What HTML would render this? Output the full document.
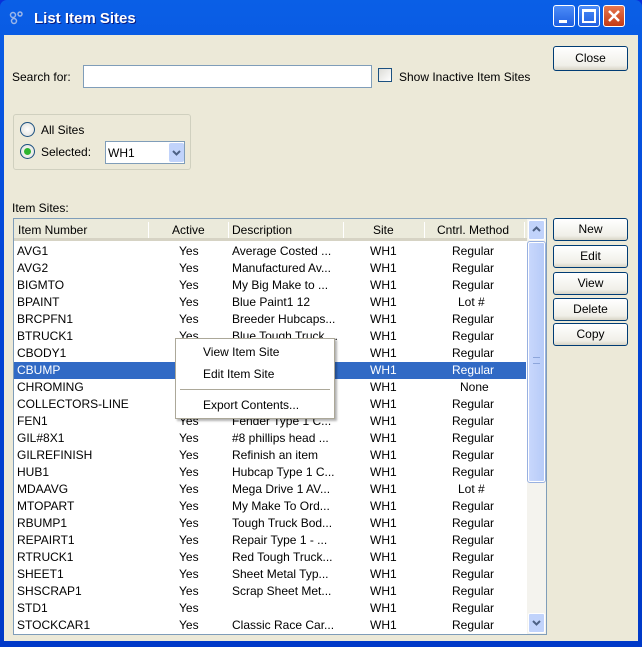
<!DOCTYPE html>
<html><head><style>
*{margin:0;padding:0;box-sizing:border-box}
body{width:642px;height:647px;overflow:hidden;font-family:"Liberation Sans",sans-serif;font-size:12px;color:#000;background:#0831d9;position:relative}
.win{position:absolute;left:0;top:0;width:642px;height:647px;background:linear-gradient(#0a5fe6,#0346d8 40%,#0039c8);border-radius:7px 7px 0 0}
.client{position:absolute;left:4px;top:35px;width:634px;height:606px;background:#ece9d8}
.title{position:absolute;left:34px;top:10px;color:#fff;font-weight:bold;font-size:15px;text-shadow:1px 1px #0a1c80}
.tb{position:absolute;top:5px;width:22px;height:22px;border:1px solid #fff;border-radius:3px;background:linear-gradient(#4c8cf8,#1f5fe0)}
.abs{position:absolute}
.btn{position:absolute;left:553px;width:75px;height:23px;border:1px solid #003c74;border-radius:3px;background:linear-gradient(#fff,#f0efe8 80%,#d8d4c6);text-align:center;line-height:21px;font-size:12px}
.table{position:absolute;left:13px;top:218px;width:534px;height:417px;border:1px solid #7f9db9;background:#fff;overflow:hidden}
.hdr{position:absolute;left:0;top:0;width:513px;height:22px;background:#ebeadb;border-bottom:3px solid #d6d3c4}
.hdr span{position:absolute;top:4px}
.sep{position:absolute;top:3px;width:1px;height:16px;background:#c7c5b2;border-right:1px solid #fff}
.row{position:absolute;left:0;width:512px;height:17px;line-height:17px}
.row span{position:absolute;white-space:nowrap}
.sel{background:#316ac5;color:#fff}
</style></head><body>
<div class="win"></div>
<svg class="abs" style="left:9px;top:11px" width="16" height="14"><circle cx="4" cy="4" r="2.5" fill="none" stroke="#9cb6e8" stroke-width="1.5"/><circle cx="11" cy="3" r="2" fill="none" stroke="#9cb6e8" stroke-width="1.5"/><circle cx="5" cy="10" r="2.5" fill="none" stroke="#9cb6e8" stroke-width="1.5"/></svg>
<div class="title">List Item Sites</div>
<div class="tb" style="left:553px"><div class="abs" style="left:5px;top:14px;width:8px;height:3px;background:#fff"></div></div>
<div class="tb" style="left:578px"><div class="abs" style="left:3px;top:3px;width:14px;height:14px;border:2px solid #fff;border-top-width:3px"></div></div>
<div class="tb" style="left:603px;background:linear-gradient(#e6774f,#c53a14)"><svg class="abs" style="left:2px;top:2px" width="16" height="16"><path d="M3 3L13 13M13 3L3 13" stroke="#fff" stroke-width="2.5"/></svg></div>
<div class="client"></div>
<div class="btn" style="top:46px;height:25px;line-height:23px">Close</div>
<div class="abs" style="left:12px;top:70px">Search for:</div>
<div class="abs" style="left:83px;top:65px;width:289px;height:23px;border:1px solid #7f9db9;background:#fff"></div>
<div class="abs" style="left:378px;top:68px;width:14px;height:14px;border:1px solid #1c5180;background:linear-gradient(135deg,#dcdcd7,#fff)"></div>
<div class="abs" style="left:399px;top:70px">Show Inactive Item Sites</div>
<div class="abs" style="left:13px;top:114px;width:178px;height:56px;border:1px solid #d0d0bf;border-radius:3px"></div>
<div class="abs" style="left:20px;top:122px;width:15px;height:15px;border:1px solid #1c5180;border-radius:50%;background:radial-gradient(#fff,#dcdcd7)"></div>
<div class="abs" style="left:41px;top:123px">All Sites</div>
<div class="abs" style="left:20px;top:144px;width:15px;height:15px;border:1px solid #1c5180;border-radius:50%;background:radial-gradient(#fff,#dcdcd7)"><div class="abs" style="left:3px;top:3px;width:7px;height:7px;border-radius:50%;background:#2fb52f"></div></div>
<div class="abs" style="left:41px;top:145px">Selected:</div>
<div class="abs" style="left:105px;top:141px;width:80px;height:23px;border:1px solid #7f9db9;background:#fff"><span class="abs" style="left:2px;top:4px">WH1</span><div class="abs" style="left:63px;top:1px;width:15px;height:19px;background:#c1d3fb;border-radius:2px"><svg width="15" height="19"><path d="M4 8l3.5 3.5L11 8" stroke="#4d6185" stroke-width="2" fill="none"/></svg></div></div>
<div class="abs" style="left:12px;top:201px">Item Sites:</div>
<div class="table">
<div class="hdr">
<span style="left:4px">Item Number</span><div class="sep" style="left:134px"></div>
<span style="left:158px">Active</span><div class="sep" style="left:214px"></div>
<span style="left:218px">Description</span><div class="sep" style="left:329px"></div>
<span style="left:359px">Site</span><div class="sep" style="left:410px"></div>
<span style="left:423px">Cntrl. Method</span><div class="sep" style="left:510px"></div>
</div>
<div id="rows"></div>
<div class="abs" style="left:513px;top:0;width:19px;height:415px;background:#f4f3ee"></div>
<div class="abs" style="left:514px;top:1px;width:17px;height:20px;background:#c1d3fb;border:1px solid #fff;border-radius:2px"><svg width="15" height="18"><path d="M4 10l3.5-3.5L11 10" stroke="#4d6185" stroke-width="2" fill="none"/></svg></div>
<div class="abs" style="left:514px;top:23px;width:17px;height:240px;background:linear-gradient(90deg,#c8d7fc,#b7cbf8);border:1px solid #fff;outline:1px solid #98b0e0;border-radius:2px"><div class="abs" style="left:4px;top:114px;width:7px;height:7px;border-top:1px solid #8da6db;border-bottom:1px solid #8da6db"></div></div>
<div class="abs" style="left:514px;top:394px;width:17px;height:20px;background:#c1d3fb;border:1px solid #fff;border-radius:2px"><svg width="15" height="18"><path d="M4 7l3.5 3.5L11 7" stroke="#4d6185" stroke-width="2" fill="none"/></svg></div>
</div>
<div class="btn" style="top:218px">New</div>
<div class="btn" style="top:245px">Edit</div>
<div class="btn" style="top:272px">View</div>
<div class="btn" style="top:298px">Delete</div>
<div class="btn" style="top:323px">Copy</div>
<div class="abs" style="left:175px;top:338px;width:160px;height:81px;background:#fff;border:1px solid #aca899;box-shadow:2px 2px 2px rgba(0,0,0,.3)">
<div class="abs" style="left:27px;top:6px">View Item Site</div>
<div class="abs" style="left:27px;top:28px">Edit Item Site</div>
<div class="abs" style="left:4px;top:50px;width:150px;height:1px;background:#aca899"></div>
<div class="abs" style="left:27px;top:59px">Export Contents...</div>
</div>
<script>
var d=[["AVG1","Average Costed ...","Regular"],["AVG2","Manufactured Av...","Regular"],["BIGMTO","My Big Make to ...","Regular"],["BPAINT","Blue Paint1 12","Lot #"],["BRCPFN1","Breeder Hubcaps...","Regular"],["BTRUCK1","Blue Tough Truck ...","Regular"],["CBODY1","Tough Truck Bod...","Regular"],["CBUMP","Tough Truck Bu...","Regular"],["CHROMING","Chrome Service ...","None"],["COLLECTORS-LINE","Collectors Line ...","Regular"],["FEN1","Fender Type 1 C...","Regular"],["GIL#8X1","#8 phillips head ...","Regular"],["GILREFINISH","Refinish an item","Regular"],["HUB1","Hubcap Type 1 C...","Regular"],["MDAAVG","Mega Drive 1 AV...","Lot #"],["MTOPART","My Make To Ord...","Regular"],["RBUMP1","Tough Truck Bod...","Regular"],["REPAIRT1","Repair Type 1 - ...","Regular"],["RTRUCK1","Red Tough Truck...","Regular"],["SHEET1","Sheet Metal Typ...","Regular"],["SHSCRAP1","Scrap Sheet Met...","Regular"],["STD1","","Regular"],["STOCKCAR1","Classic Race Car...","Regular"]];
var h="";d.forEach(function(r,i){h+='<div class="row'+(i==7?' sel':'')+'" style="top:'+(24+i*17)+'px"><span style="left:3px">'+r[0]+'</span><span style="left:165px">Yes</span><span style="left:218px">'+r[1]+'</span><span style="left:356px">WH1</span><span style="left:'+(r[2]=="Regular"?438:r[2]=="None"?446:444)+'px">'+r[2]+'</span></div>';});
document.getElementById("rows").innerHTML=h;
</script>
</body></html>
